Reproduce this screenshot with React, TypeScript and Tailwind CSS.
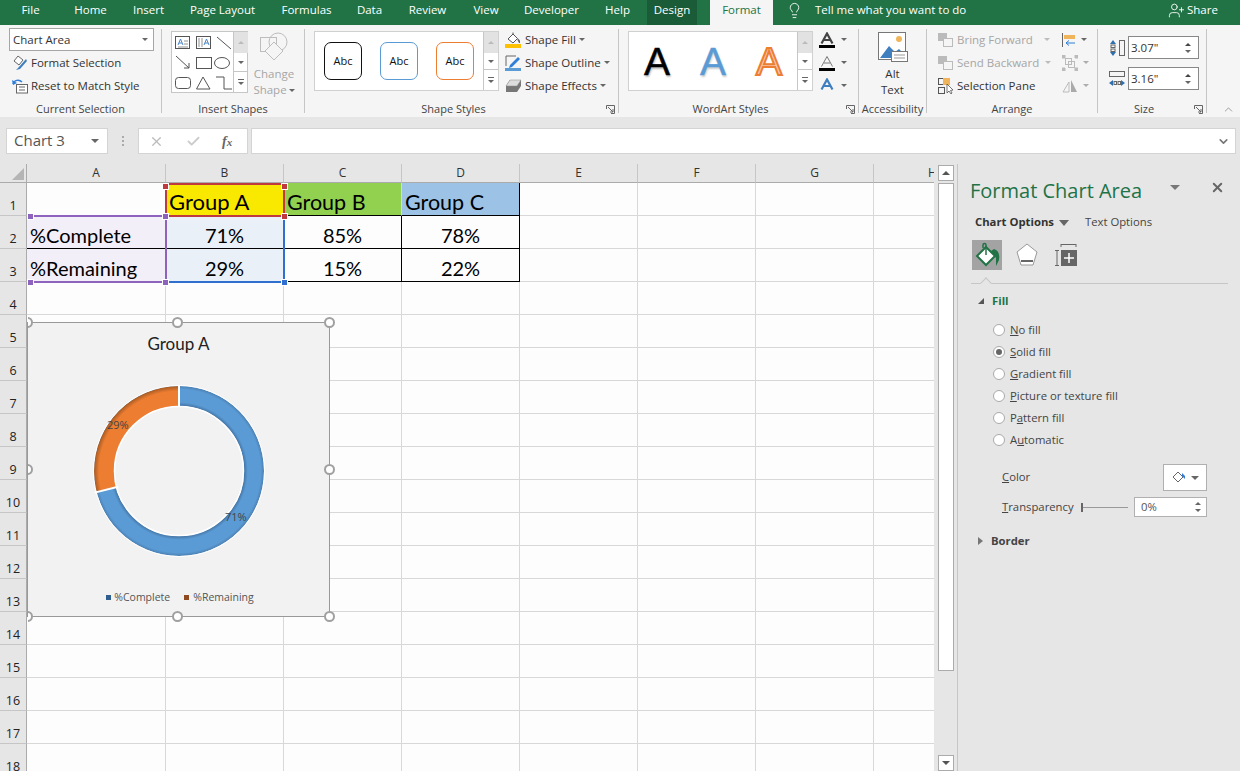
import type { ReactNode } from "react";
import { ChevronDown, ChevronUp, X, Check, Lightbulb, UserPlus } from "lucide-react";

const UI = "font-['Open_Sans','Noto_Sans',sans-serif]";
const CELL = "font-['Lato','Noto_Sans',sans-serif]";

const TABS: [string, string][] = [
  ["File", "w-[61px]"], ["Home", "w-[59px]"], ["Insert", "w-[57px]"], ["Page Layout", "w-[91px]"],
  ["Formulas", "w-[77px]"], ["Data", "w-[49px]"], ["Review", "w-[67px]"], ["View", "w-[50px]"],
  ["Developer", "w-[81px]"], ["Help", "w-[51px]"],
];
const COLS = ["A", "B", "C", "D", "E", "F", "G", "H"];
const ROWS = Array.from({ length: 18 }, (_, i) => i + 1);

function Caret({ className = "" }: { className?: string }) {
  return <span className={`inline-block w-0 h-0 border-x-[3px] border-x-transparent border-t-[3px] border-t-[#666] ${className}`} />;
}

function Launcher() {
  return (
    <svg width="9" height="9" viewBox="0 0 9 9" fill="none" stroke="#666" strokeWidth="1" className="absolute right-[3px] bottom-[3px]">
      <path d="M0.5 4V0.5H8.5V8.5H5M2 2L7 7M7 4V7H4" />
    </svg>
  );
}

function Group({ label, className, children, launcher }: { label: string; className: string; children: ReactNode; launcher?: boolean }) {
  return (
    <div className={`relative h-full shrink-0 flex flex-col ${className}`}>
      <div className="flex-1 min-h-0 flex">{children}</div>
      <div className={`h-[16px] flex items-center justify-center text-[11px] text-[#444] whitespace-nowrap ${launcher ? "pr-[16px]" : ""}`}>{label}</div>
      {launcher && <Launcher />}
    </div>
  );
}

function Sep() {
  return <div className="w-px shrink-0 mt-[4px] mb-[4px] bg-[#c6c6c6]" />;
}

function GalleryScroll() {
  return (
    <div className="w-[15px] shrink-0 flex flex-col border-l border-[#c6c6c6] text-[#666]">
      <div className="h-[21px] bg-[#e2e2e2] flex items-center justify-center"><span className="w-0 h-0 border-x-[3px] border-x-transparent border-b-[3px] border-b-[#bbb]" /></div>
      <div className="flex-1 border-b border-[#c6c6c6] flex items-center justify-center"><Caret /></div>
      <div className="h-[20px] flex flex-col items-center justify-center gap-[2px]"><span className="w-[6px] h-px bg-[#666]" /><Caret /></div>
    </div>
  );
}

function FillIcon({ bar }: { bar: string }) {
  return (
    <svg width="17" height="16" viewBox="0 0 17 16" className="shrink-0">
      <path d="M3 7L8 2L12.5 6.5L8 11Z" fill="#fff" stroke="#555" />
      <path d="M8 2V0.5" stroke="#555" />
      <path d="M12.5 6L15 8.5V11H14L12.5 8Z" fill="#666" />
      <rect x="0" y="12" width="16" height="4" fill={bar} />
    </svg>
  );
}

function OutlineIcon() {
  return (
    <svg width="17" height="16" viewBox="0 0 17 16" className="shrink-0">
      <path d="M1 11V1H11" fill="none" stroke="#666" />
      <path d="M5 10L13 2L15 4L7 12L4 13Z" fill="#2f7ed8" />
      <rect x="0" y="13" width="16" height="3" fill="#5b9bd5" />
    </svg>
  );
}

function EffectsIcon() {
  return (
    <svg width="17" height="14" viewBox="0 0 17 14" className="shrink-0">
      <path d="M5 1H16V7L12 13H1V7Z" fill="#777" />
      <path d="M5 1H16L12 7H1Z" fill="#ddd" stroke="#888" strokeWidth="0.5" />
    </svg>
  );
}

function StyleAbc({ color, mr }: { color: string; mr: string }) {
  return (
    <div className={`w-[38px] h-[38px] rounded-[7px] bg-white flex items-center justify-center text-[11px] text-[#111] border ${color} ${mr}`}>Abc</div>
  );
}

function SmallA({ stroke, bar, fill }: { stroke: string; bar?: boolean; fill: string }) {
  return (
    <div className="flex items-center h-[23px]">
      <svg width="16" height="16" viewBox="0 0 16 16" className="shrink-0">
        <path d="M2.5 11.5L8 1.5L13.5 11.5M5 8H11" fill="none" stroke={stroke} strokeWidth={fill === "none" ? 1 : 2.2} />
        {bar && <rect x="0" y="13" width="16" height="3" fill="#000" />}
      </svg>
      <Caret className="ml-[6px]" />
    </div>
  );
}

function ShapesGallery() {
  return (
    <div className="ml-[9px] mt-[6px] w-[77px] h-[62px] flex bg-white border border-[#c6c6c6]">
      <svg width="61" height="60" viewBox="0 0 61 60" fill="none" stroke="#555" className="shrink-0">
        <rect x="3.5" y="4.5" width="14" height="12" />
        <path d="M6 13L8.5 7L11 13M7 11H10" stroke="#4a86c8" />
        <path d="M12 9H16M12 12H16M6 15H16" stroke="#777" strokeWidth="0.8" />
        <rect x="24.5" y="4.5" width="14" height="12" />
        <path d="M27 6V15M30 6V15" stroke="#777" strokeWidth="0.8" />
        <path d="M32 13L34.5 7L37 13M33 11H36" stroke="#4a86c8" />
        <path d="M45 5L59 17" />
        <path d="M4 24L17 36M17 31V36H12" />
        <rect x="24.5" y="25.5" width="15" height="11" />
        <ellipse cx="50" cy="31" rx="7.5" ry="5.5" />
        <rect x="3.5" y="45.5" width="15" height="11" rx="3" />
        <path d="M24.5 57L31 45L38 57Z" />
        <path d="M44 45H52V57H60" />
      </svg>
      <GalleryScroll />
    </div>
  );
}

function Ribbon() {
  return (
    <div className="h-[92px] flex bg-[#f5f5f5] text-[11.5px] text-[#333] whitespace-nowrap">
      <Group label="Current Selection" className="w-[161px]">
        <div className="pl-[9px] pt-[3px] w-full">
          <div className="w-[145px] h-[23px] border border-[#a6a6a6] bg-white flex items-center justify-between pl-[3px] pr-[5px]">
            <span>Chart Area</span><Caret />
          </div>
          <div className="h-[23px] flex items-center gap-[3px] pl-[3px]">
            <svg width="16" height="16" viewBox="0 0 16 16" className="shrink-0">
              <path d="M2 6L6 1L11 5L7 10Z" fill="#fff" stroke="#666" />
              <path d="M6 13L14 4L15 6L8 14L4 15Z" fill="#3f7fbf" />
            </svg>
            <span>Format Selection</span>
          </div>
          <div className="h-[23px] flex items-center gap-[3px] pl-[3px]">
            <svg width="16" height="16" viewBox="0 0 16 16" className="shrink-0" fill="none">
              <rect x="4.5" y="6.5" width="11" height="8.5" stroke="#666" fill="#fff" />
              <path d="M7 9H13M7 12H13" stroke="#666" />
              <path d="M1 6C2 2 7 1 10 4" stroke="#2f7ed8" strokeWidth="1.5" />
              <path d="M0 2L1 7L5 5Z" fill="#2f7ed8" />
            </svg>
            <span>Reset to Match Style</span>
          </div>
        </div>
      </Group>
      <Sep />
      <Group label="Insert Shapes" className="w-[142px]">
        <ShapesGallery />
        <div className="ml-[3px] w-[46px] flex flex-col items-center text-[#a6a6a6] leading-[16px]">
          <svg width="30" height="30" viewBox="0 0 30 30" fill="none" stroke="#bdbdbd" className="mt-[7px] shrink-0">
            <rect x="1.5" y="5.5" width="16" height="14" />
            <circle cx="19" cy="10" r="9" />
            <path d="M15 10L24 19L15 28L6 19Z" fill="#f5f5f5" />
          </svg>
          <span className="mt-[4px]">Change</span>
          <span className="flex items-center gap-[2px]">Shape<Caret /></span>
        </div>
      </Group>
      <Sep />
      <Group label="Shape Styles" className="w-[313px]" launcher>
        <div className="ml-[9px] mt-[6px] w-[185px] h-[60px] flex bg-white border border-[#d0d0d0]">
          <div className="flex-1 flex items-center pl-[9px]">
            <StyleAbc color="border-[#111]" mr="mr-[18px]" />
            <StyleAbc color="border-[#5b9bd5]" mr="mr-[18px]" />
            <StyleAbc color="border-[#ed7d31]" mr="" />
          </div>
          <GalleryScroll />
        </div>
        <div className="ml-[6px] mt-[3px] flex flex-col">
          <div className="h-[23px] flex items-center gap-[3px]"><FillIcon bar="#ffc000" /><span>Shape Fill</span><Caret /></div>
          <div className="h-[23px] flex items-center gap-[3px]"><OutlineIcon /><span>Shape Outline</span><Caret /></div>
          <div className="h-[23px] flex items-center gap-[3px]"><EffectsIcon /><span>Shape Effects</span><Caret /></div>
        </div>
      </Group>
      <Sep />
      <Group label="WordArt Styles" className="w-[239px]" launcher>
        <div className="ml-[9px] mt-[6px] w-[185px] h-[60px] flex bg-white border border-[#d0d0d0]">
          <div className="flex-1 flex items-center text-[39px] text-center font-['Liberation_Sans',sans-serif] leading-none">
            <span className="w-[56px] text-black [-webkit-text-stroke:0.5px_#000] [text-shadow:1px_2px_2px_#bbb]">A</span>
            <span className="w-[56px] text-[#5b9bd5] [-webkit-text-stroke:0.5px_#5b9bd5] [text-shadow:1px_2px_2px_#ccc]">A</span>
            <span className="w-[56px] text-[#f8cbad] [-webkit-text-stroke:2px_#ed7d31]">A</span>
          </div>
          <GalleryScroll />
        </div>
        <div className="ml-[6px] mt-[3px] flex flex-col">
          <SmallA stroke="#444" bar fill="#444" />
          <SmallA stroke="#777" bar fill="none" />
          <SmallA stroke="#3f7fbf" fill="#3f7fbf" />
        </div>
      </Group>
      <Sep />
      <Group label="Accessibility" className="w-[67px]">
        <div className="w-full flex flex-col items-center leading-[16px]">
          <svg width="30" height="30" viewBox="0 0 30 30" className="mt-[7px] shrink-0">
            <rect x="0.5" y="0.5" width="27" height="27" fill="#fff" stroke="#777" />
            <circle cx="21" cy="7" r="3" fill="#f0b55a" />
            <path d="M2 26L11 14L17 20L21 17L26 22V26Z" fill="#3f7fbf" />
            <rect x="13.5" y="19.5" width="16" height="10" fill="#fff" stroke="#777" />
            <path d="M16 23H27M16 26H27" stroke="#999" />
          </svg>
          <span className="mt-[4px]">Alt</span>
          <span>Text</span>
        </div>
      </Group>
      <Sep />
      <Group label="Arrange" className="w-[170px]">
        <div className="flex pl-[11px] pt-[3px]">
          <div className="w-[124px] flex flex-col">
            <div className="h-[23px] flex items-center gap-[3px] text-[#a6a6a6]">
              <svg width="16" height="14" viewBox="0 0 16 14" className="shrink-0"><rect x="0" y="0" width="9" height="8" fill="#bbb" /><rect x="5.5" y="5.5" width="9" height="8" fill="#f5f5f5" stroke="#bbb" /></svg>
              <span>Bring Forward</span><Caret className="ml-[8px] opacity-40" />
            </div>
            <div className="h-[23px] flex items-center gap-[3px] text-[#a6a6a6]">
              <svg width="16" height="14" viewBox="0 0 16 14" className="shrink-0"><rect x="0" y="0" width="9" height="8" fill="#bbb" /><rect x="5.5" y="5.5" width="9" height="8" fill="#f5f5f5" stroke="#bbb" /></svg>
              <span>Send Backward</span><Caret className="ml-[3px] opacity-40" />
            </div>
            <div className="h-[23px] flex items-center gap-[3px]">
              <svg width="16" height="16" viewBox="0 0 16 16" className="shrink-0" fill="none">
                <rect x="0.5" y="0.5" width="6" height="6" stroke="#555" />
                <rect x="5" y="0" width="7" height="7" fill="#f0b55a" />
                <rect x="0.5" y="9.5" width="6" height="6" stroke="#555" />
                <path d="M9 6L9 15L11 13L13 16L14 15L12.5 12.5L15 12Z" fill="#fff" stroke="#555" strokeWidth="0.8" />
              </svg>
              <span>Selection Pane</span>
            </div>
          </div>
          <div className="flex flex-col">
            <div className="h-[23px] flex items-center gap-[5px]">
              <svg width="14" height="14" viewBox="0 0 14 14" className="shrink-0"><path d="M0.5 0V14" stroke="#666" /><rect x="2" y="2" width="11" height="4" fill="#f0b55a" /><path d="M13 10H4M7 7.5L4 10L7 12.5" stroke="#2f7ed8" fill="none" /></svg>
              <Caret />
            </div>
            <div className="h-[23px] flex items-center gap-[5px]">
              <svg width="16" height="16" viewBox="0 0 16 16" className="shrink-0" fill="none" stroke="#bbb"><rect x="3.5" y="3.5" width="6" height="6" /><rect x="6.5" y="6.5" width="6" height="6" /><path d="M0 0H3V3H0ZM13 0H16V3H13ZM0 13H3V16H0ZM13 13H16V16H13Z" fill="#bbb" /></svg>
              <Caret className="opacity-50" />
            </div>
            <div className="h-[23px] flex items-center gap-[5px]">
              <svg width="16" height="14" viewBox="0 0 16 14" className="shrink-0"><path d="M7 3V13H1Z" fill="none" stroke="#bbb" /><path d="M9 1L15 13H9Z" fill="#aaa" /></svg>
              <Caret className="opacity-50" />
            </div>
          </div>
        </div>
      </Group>
      <Sep />
      <Group label="Size" className="w-[108px]" launcher>
        <div className="pl-[11px] pt-[11px] flex flex-col gap-[8px]">
          <div className="flex items-center gap-[3px]">
            <svg width="16" height="16" viewBox="0 0 16 16" className="shrink-0">
              <rect x="10.5" y="0.5" width="5" height="15" fill="none" stroke="#666" />
              <path d="M4 0L1 4H7ZM4 16L1 12H7Z" fill="#2f6fb0" />
              <rect x="2" y="5" width="4" height="2.5" fill="none" stroke="#666" /><rect x="2" y="9" width="4" height="2.5" fill="none" stroke="#666" />
            </svg>
            <SizeInput value={'3.07"'} />
          </div>
          <div className="flex items-center gap-[3px]">
            <svg width="16" height="16" viewBox="0 0 16 16" className="shrink-0">
              <rect x="0.5" y="0.5" width="15" height="5" fill="none" stroke="#666" />
              <path d="M0 12L4 9V15ZM16 12L12 9V15Z" fill="#2f6fb0" />
              <rect x="5" y="10.5" width="2.5" height="3" fill="none" stroke="#666" /><rect x="9" y="10.5" width="2.5" height="3" fill="none" stroke="#666" />
            </svg>
            <SizeInput value={'3.16"'} />
          </div>
        </div>
      </Group>
      <Sep />
      <div className="flex-1 relative">
        <ChevronUp size={13} strokeWidth={1} className="absolute right-[5px] bottom-[1px] text-[#555]" />
      </div>
    </div>
  );
}

function SizeInput({ value }: { value: string }) {
  return (
    <div className="w-[71px] h-[23px] bg-white border border-[#888] flex items-center justify-between pl-[2px] pr-[7px] text-[#333]">
      <span>{value}</span>
      <span className="flex flex-col gap-[4px]">
        <span className="w-0 h-0 border-x-[3px] border-x-transparent border-b-[3px] border-b-[#444]" />
        <Caret className="border-t-[#444]" />
      </span>
    </div>
  );
}

function FormulaBar() {
  return (
    <div className="h-[47px] pt-[11px] pb-[10px] bg-[#e6e6e6] flex items-stretch whitespace-nowrap">
      <div className="ml-[6px] w-[102px] bg-white border border-[#d4d4d4] flex items-center justify-between pl-[7px] pr-[8px] text-[15px] text-[#555]">
        <span className="pb-[2px]">Chart 3</span><Caret className="border-x-[4px] border-t-[4px]" />
      </div>
      <div className="w-[30px] flex flex-col items-center justify-center gap-[2px]">
        <span className="w-[2px] h-[2px] bg-[#aaa]" /><span className="w-[2px] h-[2px] bg-[#aaa]" /><span className="w-[2px] h-[2px] bg-[#aaa]" />
      </div>
      <div className="w-[110px] bg-white border border-[#d4d4d4] flex items-center text-[#bbb]">
        <X size={15} className="ml-[10px]" />
        <Check size={15} strokeWidth={3} className="ml-[22px] text-[#ccc]" />
        <span className="ml-[21px] text-[14px] italic font-['Liberation_Serif',serif] font-bold text-[#666]">f<span className="text-[11px]">x</span></span>
      </div>
      <div className="ml-[3px] w-[985px] bg-white border border-[#d4d4d4] flex items-center justify-end pr-[5px]">
        <ChevronDown size={13} strokeWidth={3} className="text-[#777]" />
      </div>
    </div>
  );
}

const TEXT_CELLS: Record<string, { text: string; cls: string }> = {
  B1: { text: "Group A", cls: "bg-[#f9e900] text-[22px] pl-[3px] justify-start" },
  C1: { text: "Group B", cls: "bg-[#92d14f] text-[21.5px] !border-b-black pl-[3px] justify-start" },
  D1: { text: "Group C", cls: "bg-[#9cc2e5] text-[21.5px] !border-b-black !border-r-black pl-[3px] justify-start" },
  A2: { text: "%Complete", cls: "bg-[#f3eff8] text-[19.3px] !border-b-black pl-[3px] justify-start" },
  B2: { text: "71%", cls: "bg-[#e9f0f8] !border-b-black justify-center" },
  C2: { text: "85%", cls: "!border-b-black !border-r-black justify-center" },
  D2: { text: "78%", cls: "!border-b-black !border-r-black justify-center" },
  A3: { text: "%Remaining", cls: "bg-[#f3eff8] text-[19.6px] !border-b-black pl-[3px] justify-start" },
  B3: { text: "29%", cls: "bg-[#e9f0f8] !border-b-black justify-center" },
  C3: { text: "15%", cls: "!border-b-black !border-r-black justify-center" },
  D3: { text: "22%", cls: "!border-b-black !border-r-black justify-center" },
};

function Grid() {
  return (
    <div className="grid grid-cols-[27px_139px_118px_118px_118px_118px_118px_118px_118px] grid-rows-[19px_repeat(18,33px)] w-[992px] bg-[#fdfdfd]">
      <div className="bg-[#e6e6e6] border-r border-b border-[#ababab] flex items-end justify-end p-[2px]">
        <span className="w-0 h-0 border-l-[12px] border-l-transparent border-b-[12px] border-b-[#b5b5b5]" />
      </div>
      {COLS.map((c) => (
        <div key={c} className="bg-[#e6e6e6] border-r border-b border-r-[#c6c6c6] border-b-[#ababab] flex items-center justify-center text-[12px] text-[#333]">{c}</div>
      ))}
      {ROWS.map((r) => (
        <div key={r} className="contents">
          <div className="bg-[#e6e6e6] border-r border-b border-r-[#ababab] border-b-[#c6c6c6] flex items-end justify-center pb-[2px] text-[12.5px] leading-[14px] text-[#222]">{r}</div>
          {COLS.map((c) => {
            const cell = TEXT_CELLS[c + r];
            return (
              <div key={c} className={`border-r border-b border-[#d8d8d8] flex items-end text-[20px] leading-[26px] text-black ${CELL} ${cell ? cell.cls : ""}`}>
                {cell?.text}
              </div>
            );
          })}
        </div>
      ))}
    </div>
  );
}

function Handle({ className, color }: { className: string; color: string }) {
  return <span className={`absolute w-[7px] h-[7px] border border-white ${color} ${className}`} />;
}

function Selections() {
  return (
    <>
      <div className="absolute left-[27px] top-[51px] w-[140px] h-[68px] border-y-2 border-r-2 border-[#8e63bd]" />
      <div className="absolute left-[165px] top-[19px] w-[120px] h-[34px] border-2 border-[#c0393f]" />
      <div className="absolute left-[167px] top-[117px] w-[118px] h-[2px] bg-[#2f6fd0]" />
      <div className="absolute left-[283px] top-[53px] w-[2px] h-[66px] bg-[#2f6fd0]" />
      <Handle className="left-[162px] top-[49px]" color="bg-[#8e63bd]" />
      <Handle className="left-[162px] top-[115px]" color="bg-[#8e63bd]" />
      <Handle className="left-[281px] top-[49px]" color="bg-[#c0393f]" />
      <Handle className="left-[281px] top-[115px]" color="bg-[#2f6fd0]" />
      <Handle className="left-[27px] top-[49px] w-[4px]" color="bg-[#8e63bd]" />
      <Handle className="left-[27px] top-[115px] w-[4px]" color="bg-[#8e63bd]" />
      <Handle className="left-[162px] top-[19px] h-[4px]" color="bg-[#c0393f]" />
      <Handle className="left-[281px] top-[19px] h-[4px]" color="bg-[#c0393f]" />
    </>
  );
}

function Donut() {
  const r = 75;
  const cx = 90;
  const cy = 90;
  const a = (-104.4 * Math.PI) / 180;
  const x = cx + r * Math.sin(a);
  const y = cy - r * Math.cos(a);
  return (
    <svg width="180" height="180" viewBox="0 0 180 180" fill="none">
      <defs>
        <radialGradient id="blueShade" gradientUnits="userSpaceOnUse" cx="90" cy="90" r="85">
          <stop offset="0.76" stopColor="#3f6f9f" />
          <stop offset="0.81" stopColor="#5b9bd5" />
          <stop offset="0.96" stopColor="#5b9bd5" />
          <stop offset="1" stopColor="#4a80b3" />
        </radialGradient>
        <radialGradient id="orangeShade" gradientUnits="userSpaceOnUse" cx="90" cy="90" r="85">
          <stop offset="0.78" stopColor="#ed7d31" />
          <stop offset="0.94" stopColor="#ed7d31" />
          <stop offset="1" stopColor="#a55a24" />
        </radialGradient>
      </defs>
      <circle cx={cx} cy={cy} r={r} stroke="url(#blueShade)" strokeWidth="20" />
      <path d={`M${cx} ${cy - r}A${r} ${r} 0 0 0 ${x} ${y}`} stroke="url(#orangeShade)" strokeWidth="20" />
      <path d={`M${cx} ${cy - r - 11}V${cy - r + 11}`} stroke="#fff" strokeWidth="2" />
      <path d={`M${cx + 63 * Math.sin(a)} ${cy - 63 * Math.cos(a)}L${cx + 87 * Math.sin(a)} ${cy - 87 * Math.cos(a)}`} stroke="#fff" strokeWidth="2" />
      <circle cx={cx} cy={cy} r="85.5" stroke="#fff" strokeWidth="1" />
      <circle cx={cx} cy={cy} r="64.5" stroke="#fff" strokeWidth="1.5" />
    </svg>
  );
}

function ChartHandle({ className }: { className: string }) {
  return <span className={`absolute w-[11px] h-[11px] rounded-full bg-white border-2 border-[#a0a0a0] ${className}`} />;
}

function Chart() {
  return (
    <div className="absolute left-[27px] top-[158px] w-[303px] h-[295px] bg-[#f2f2f2] border border-[#999] flex flex-col items-center">
      <div className={`mt-[11px] text-[17px] leading-[20px] text-[#222] ${CELL}`}>Group A</div>
      <div className="mt-[27px] h-[180px]"><Donut /></div>
      <div className="mt-[29px] ml-[3px] flex items-center text-[10.5px] text-[#555]">
        <span className="w-[5px] h-[5px] bg-[#2f5f8f] mr-[3px]" /><span>%Complete</span>
        <span className="w-[5px] h-[5px] bg-[#8f4a1f] ml-[14px] mr-[4px]" /><span>%Remaining</span>
      </div>
      <span className="absolute left-[197px] top-[186px] text-[11px] text-[#444]">71%</span>
      <span className="absolute left-[79px] top-[94px] text-[11px] text-[#444]">29%</span>
      <ChartHandle className="left-[-6px] top-[-6px] [clip-path:inset(0_0_0_6px)]" />
      <ChartHandle className="left-[144px] top-[-6px]" />
      <ChartHandle className="right-[-6px] top-[-6px]" />
      <ChartHandle className="left-[-6px] top-[141px] [clip-path:inset(0_0_0_6px)]" />
      <ChartHandle className="right-[-6px] top-[141px]" />
      <ChartHandle className="left-[-6px] bottom-[-6px] [clip-path:inset(0_0_0_6px)]" />
      <ChartHandle className="left-[144px] bottom-[-6px]" />
      <ChartHandle className="right-[-6px] bottom-[-6px]" />
    </div>
  );
}

function VScroll() {
  return (
    <div className="ml-[4px] w-[16px] flex flex-col bg-[#e6e6e6]">
      <div className="h-[16px] mt-[1px] bg-white border border-[#ababab] flex items-center justify-center">
        <span className="w-0 h-0 border-x-[4px] border-x-transparent border-b-[4px] border-b-[#555]" />
      </div>
      <div className="mt-[2px] h-[488px] bg-white border border-[#ababab]" />
      <div className="flex-1" />
      <div className="h-[16px] bg-white border border-[#ababab] flex items-center justify-center">
        <span className="w-0 h-0 border-x-[4px] border-x-transparent border-t-[4px] border-t-[#555]" />
      </div>
    </div>
  );
}

function Radio({ label, checked }: { label: ReactNode; checked?: boolean }) {
  return (
    <div className="h-[22px] flex items-center">
      <span className="w-[12px] h-[12px] rounded-full border border-[#aaa] bg-white flex items-center justify-center">
        {checked && <span className="w-[6px] h-[6px] rounded-full bg-[#666]" />}
      </span>
      <span className="ml-[5px]">{label}</span>
    </div>
  );
}

function Panel() {
  return (
    <div className="w-[283px] shrink-0 bg-[#e6e6e6] border-l border-[#c6c6c6] text-[11.3px] text-[#444] whitespace-nowrap">
      <div className="relative h-[43px] pl-[12px] pt-[13px] text-[20px] leading-[27px] text-[#217346]">
        Format Chart Area
        <span className="absolute left-[212px] top-[21px] w-0 h-0 border-x-[5px] border-x-transparent border-t-[5px] border-t-[#777]" />
        <X size={15} strokeWidth={3} className="absolute left-[252px] top-[16px] text-[#666]" />
      </div>
      <div className="mt-[7px] h-[17px] flex items-center pl-[17px]">
        <span className="font-bold text-[#333]">Chart Options</span>
        <span className="ml-[5px] w-0 h-0 border-x-[5px] border-x-transparent border-t-[6px] border-t-[#666]" />
        <span className="ml-[16px]">Text Options</span>
      </div>
      <div className="mt-[9px] flex items-center pl-[14px]">
        <div className="w-[30px] h-[30px] bg-[#a3a3a3] flex items-center justify-center">
          <svg width="26" height="26" viewBox="0 0 26 26">
            <path d="M3 14L12 5L21 14L12 23Z" fill="#fff" stroke="#217346" strokeWidth="2" />
            <path d="M12 13V3C12 1 9 1 9 3V6" fill="none" stroke="#217346" strokeWidth="1.5" />
            <path d="M20 7C24 8 26 12 25 18L22 24V16L17 9Z" fill="#217346" />
          </svg>
        </div>
        <svg width="22" height="24" viewBox="0 0 22 24" className="ml-[14px]">
          <path d="M11 1L21 9L17 22H5L1 9Z" fill="#fff" stroke="#999" />
          <rect x="5" y="17" width="12" height="2" fill="#666" />
        </svg>
        <svg width="22" height="22" viewBox="0 0 22 22" className="ml-[17px]" fill="none">
          <path d="M6 0.5H21M6 0V3M21 0V3M0 6.5H4M0 21.5H4M2 6V22" stroke="#666" />
          <rect x="6" y="6" width="16" height="16" fill="#666" />
          <path d="M14 9V19M9 14H19" stroke="#fff" strokeWidth="1.5" />
        </svg>
      </div>
      <div className="relative mt-[13px] ml-[13px] w-[257px] h-px bg-[#c6c6c6]">
        <span className="absolute left-[11px] top-[-4px] w-[8px] h-[8px] rotate-45 bg-[#e6e6e6] border-l border-t border-[#c6c6c6]" />
      </div>
      <div className="mt-[9px] h-[16px] flex items-center pl-[20px] font-bold text-[#217346]">
        <span className="w-0 h-0 border-l-[6px] border-l-transparent border-b-[6px] border-b-[#555]" />
        <span className="ml-[8px]">Fill</span>
      </div>
      <div className="mt-[10px] pl-[35px]">
        <Radio label={<><u>N</u>o fill</>} />
        <Radio label={<><u>S</u>olid fill</>} checked />
        <Radio label={<><u>G</u>radient fill</>} />
        <Radio label={<><u>P</u>icture or texture fill</>} />
        <Radio label={<>P<u>a</u>ttern fill</>} />
        <Radio label={<>A<u>u</u>tomatic</>} />
      </div>
      <div className="mt-[13px] pl-[44px] flex items-center h-[27px]">
        <span className="w-[161px]"><u>C</u>olor</span>
        <div className="w-[44px] h-[27px] bg-white border border-[#b0b0b0] flex items-center justify-center gap-[5px]">
          <svg width="15" height="15" viewBox="0 0 15 15">
            <path d="M2 7L7 2L12 7L7 12Z" fill="#fff" stroke="#666" />
            <path d="M11 3L14 6V9L11 6Z" fill="#2f7ed8" />
          </svg>
          <Caret className="border-x-[4px] border-t-[4px]" />
        </div>
      </div>
      <div className="mt-[6px] pl-[44px] flex items-center h-[20px]">
        <span className="w-[79px]"><u>T</u>ransparency</span>
        <div className="w-[47px] h-[9px] flex items-center relative">
          <span className="w-[2px] h-[9px] bg-[#666]" />
          <span className="flex-1 h-px bg-[#999]" />
        </div>
        <div className="ml-[6px] w-[73px] h-[20px] bg-white border border-[#b0b0b0] flex items-center justify-between pl-[6px] pr-[5px]">
          <span className="text-[#555]">0%</span>
          <span className="flex flex-col gap-[4px]">
            <span className="w-0 h-0 border-x-[3px] border-x-transparent border-b-[3px] border-b-[#666]" />
            <Caret />
          </span>
        </div>
      </div>
      <div className="mt-[16px] h-[16px] flex items-center pl-[20px] font-bold text-[#444]">
        <span className="w-0 h-0 border-y-[4px] border-y-transparent border-l-[5px] border-l-[#777]" />
        <span className="ml-[8px]">Border</span>
      </div>
    </div>
  );
}

export default function App() {
  return (
    <div className={`w-[1240px] h-[771px] overflow-hidden bg-[#e6e6e6] ${UI}`}>
      <div className="h-[25px] flex items-stretch bg-[#217346] text-[11.5px] text-white whitespace-nowrap">
        {TABS.map(([t, w]) => (
          <div key={t} className={`${w} flex items-center justify-center pb-[5px]`}>{t}</div>
        ))}
        <div className="ml-[4px] w-[50px] bg-[#1a5c38] flex items-center justify-center pb-[5px]">Design</div>
        <div className="ml-[13px] w-[63px] bg-[#f5f5f5] text-[#217346] flex items-center justify-center pb-[5px]">Format</div>
        <Lightbulb size={17} strokeWidth={1.25} className="ml-[13px] self-center mb-[5px]" />
        <span className="ml-[12px] self-center w-[150px] mb-[5px]">Tell me what you want to do</span>
        <UserPlus size={17} strokeWidth={1.25} className="ml-[203px] self-center mb-[5px]" />
        <span className="ml-[2px] self-center mb-[5px]">Share</span>
      </div>
      <Ribbon />
      <FormulaBar />
      <div className="h-[607px] flex">
        <div className="relative w-[934px] h-full overflow-hidden">
          <Grid />
          <Selections />
          <Chart />
        </div>
        <VScroll />
        <div className="w-[3px]" />
        <Panel />
      </div>
    </div>
  );
}
